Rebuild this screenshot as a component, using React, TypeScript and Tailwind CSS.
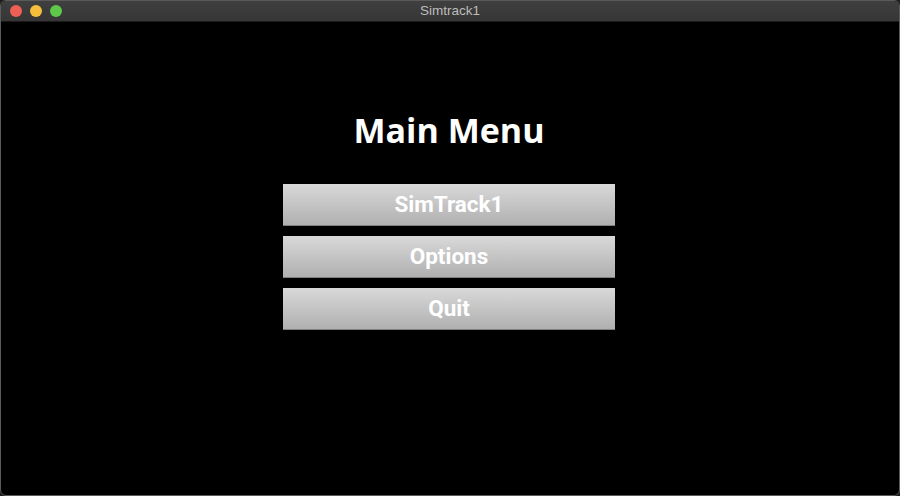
export default function App() {
  const items = ["SimTrack1", "Options", "Quit"];

  return (
    <div className="w-[900px] h-[496px] bg-[#1e1e1e] overflow-hidden">
      <div className="w-full h-full flex flex-col rounded-[6px] overflow-hidden border border-[#5a5a5a] bg-black">
        {/* title bar */}
        <div className="relative h-[21px] shrink-0 flex items-center justify-center bg-gradient-to-b from-[#3f3f3f] to-[#363636] border-b border-[#1a1a1a]">
          <div className="absolute left-[9px] top-[4px] flex gap-[8px]">
            <span className="w-[12px] h-[12px] rounded-full bg-[#ee5f56]" />
            <span className="w-[12px] h-[12px] rounded-full bg-[#f6be3b]" />
            <span className="w-[12px] h-[12px] rounded-full bg-[#5fc84b]" />
          </div>
          <span className="text-[13.5px] text-[#bdbdbd] font-['Liberation_Sans',sans-serif]">Simtrack1</span>
        </div>

        {/* content */}
        <div className="flex-1 flex flex-col items-center pt-[88px] pr-[2px]">
          <h1 className="text-[34px] leading-[40px] font-bold text-white font-['Open_Sans',sans-serif]">
            Main Menu
          </h1>
          <div className="mt-[34px] flex flex-col gap-[10px]">
            {items.map((label) => (
              <button
                key={label}
                className="w-[332px] h-[42px] flex items-center justify-center bg-gradient-to-b from-[#d9d9d9] to-[#b0b0b0] border-b border-[#7f7f7f] text-white text-[22.5px] font-bold font-['Roboto',sans-serif]"
              >
                {label}
              </button>
            ))}
          </div>
        </div>
      </div>
    </div>
  );
}
